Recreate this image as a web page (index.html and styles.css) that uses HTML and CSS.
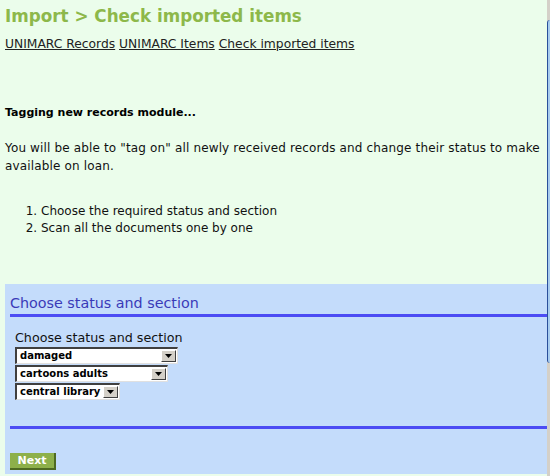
FILE: index.html
```html
<!DOCTYPE html>
<html>
<head>
<meta charset="utf-8">
<link rel="stylesheet" href="styles.css">
</head>
<body>
<div class="page">
  <h1 class="title">Import &gt; Check imported items</h1>
  <nav class="links">
    <a href="#">UNIMARC Records</a> <a href="#">UNIMARC Items</a> <a href="#">Check imported items</a>
  </nav>
  <p class="lead">Tagging new records module...</p>
  <p class="desc">You will be able to "tag on" all newly received records and change their status to make available on loan.</p>
  <ol class="steps">
    <li>Choose the required status and section</li>
    <li>Scan all the documents one by one</li>
  </ol>
  <section class="panel">
    <h2 class="panel-title">Choose status and section</h2>
    <div class="form">
      <div class="label">Choose status and section</div>
      <div class="sel sel-1"><span class="sel-text">damaged</span><span class="sel-btn"><svg width="7" height="4" viewBox="0 0 7 4"><path d="M0 0h7L3.5 4z" fill="#000"/></svg></span></div>
      <div class="sel sel-2"><span class="sel-text">cartoons adults</span><span class="sel-btn"><svg width="7" height="4" viewBox="0 0 7 4"><path d="M0 0h7L3.5 4z" fill="#000"/></svg></span></div>
      <div class="sel sel-3"><span class="sel-text">central library</span><span class="sel-btn"><svg width="7" height="4" viewBox="0 0 7 4"><path d="M0 0h7L3.5 4z" fill="#000"/></svg></span></div>
    </div>
    <hr class="rule">
    <button class="next" type="button">Next</button>
  </section>
</div>
<div class="edge"></div>
</body>
</html>
```
FILE: styles.css
```css
html, body {
  margin: 0;
  padding: 0;
  background: #ebfdeb;
  overflow: hidden;
}
body {
  font-family: "DejaVu Sans", Verdana, sans-serif;
  font-size: 12px;
  color: #000;
  width: 550px;
  height: 476px;
  position: relative;
}
.page {
  padding: 4px 3px 0 5px;
}
.title {
  margin: 0;
  font-size: 16.8px;
  font-weight: bold;
  color: #8db84a;
  line-height: 24px;
}
.links {
  margin-top: 8px;
  font-size: 12.3px;
  line-height: 16px;
}
.links a {
  color: #222;
  text-decoration: underline;
}
.lead {
  margin: 52px 0 0 0;
  font-weight: bold;
  font-size: 11px;
  line-height: 18px;
}
.desc {
  margin: 17px 0 0 0;
  font-size: 12px;
  line-height: 18px;
  letter-spacing: 0.15px;
  color: #111;
}
.steps {
  margin: 28px 0 0 0;
  padding-left: 36px;
  font-size: 12px;
  line-height: 17px;
  color: #111;
}
.panel {
  margin-top: 47px;
  background: #c4dcfb;
  height: 190px;
  margin-right: -3px;
  padding: 0 0 0 5px;
}
.panel-title {
  margin: 0;
  padding-top: 11px;
  padding-bottom: 2px;
  font-size: 14.3px;
  font-weight: normal;
  color: #3a3ab8;
  line-height: 17px;
  border-bottom: 3px solid #4c4cf4;
}
.form {
  padding: 14px 0 0 5px;
}
.label {
  font-size: 12.7px;
  line-height: 14px;
  color: #111;
}
.sel {
  display: flex;
  align-items: stretch;
  background: #fff;
  border-top: 2px solid #404040;
  border-left: 2px solid #404040;
  border-right: 1px solid #e0e0e0;
  border-bottom: 1px solid #e0e0e0;
  height: 14px;
  box-sizing: content-box;
  margin-top: 1px;
  white-space: nowrap;
}
.label + .sel { margin-top: 2px; }
.sel-1 { width: 160px; }
.sel-2 { width: 150px; }
.sel-3 { width: 102px; }
.sel-text {
  flex: 1;
  font-weight: bold;
  font-size: 10px;
  line-height: 14px;
  padding-left: 3px;
}
.sel-btn {
  width: 13px;
  margin: 1px 1px 1px 0;
  background: #d4d0c8;
  border-top: 1px solid #fff;
  border-left: 1px solid #fff;
  border-right: 1px solid #404040;
  border-bottom: 1px solid #404040;
  display: flex;
  align-items: center;
  justify-content: center;
}
.rule {
  margin: 26px 0 0 0;
  border: 0;
  border-top: 3px solid #4c4cf4;
  height: 0;
}
.next {
  display: block;
  margin-top: 24px;
  background: #8db04a;
  color: #fff;
  font-family: "DejaVu Sans", Verdana, sans-serif;
  font-weight: bold;
  font-size: 11px;
  border: 0;
  border-right: 2px solid #4e6a22;
  border-bottom: 2px solid #4e6a22;
  padding: 0;
  height: 17px;
  width: 46px;
  line-height: 15px;
}
.edge {
  position: absolute;
  top: 0;
  right: 0;
  width: 3px;
  height: 476px;
  background: #d4d0c8;
}
.edge::before {
  content: "";
  position: absolute;
  top: 20px;
  left: 0;
  width: 3px;
  height: 343px;
  background: #a8ccee;
  border-left: 1px solid #2a4f9a;
  box-sizing: border-box;
  border-radius: 3px 0 0 3px;
}
```
